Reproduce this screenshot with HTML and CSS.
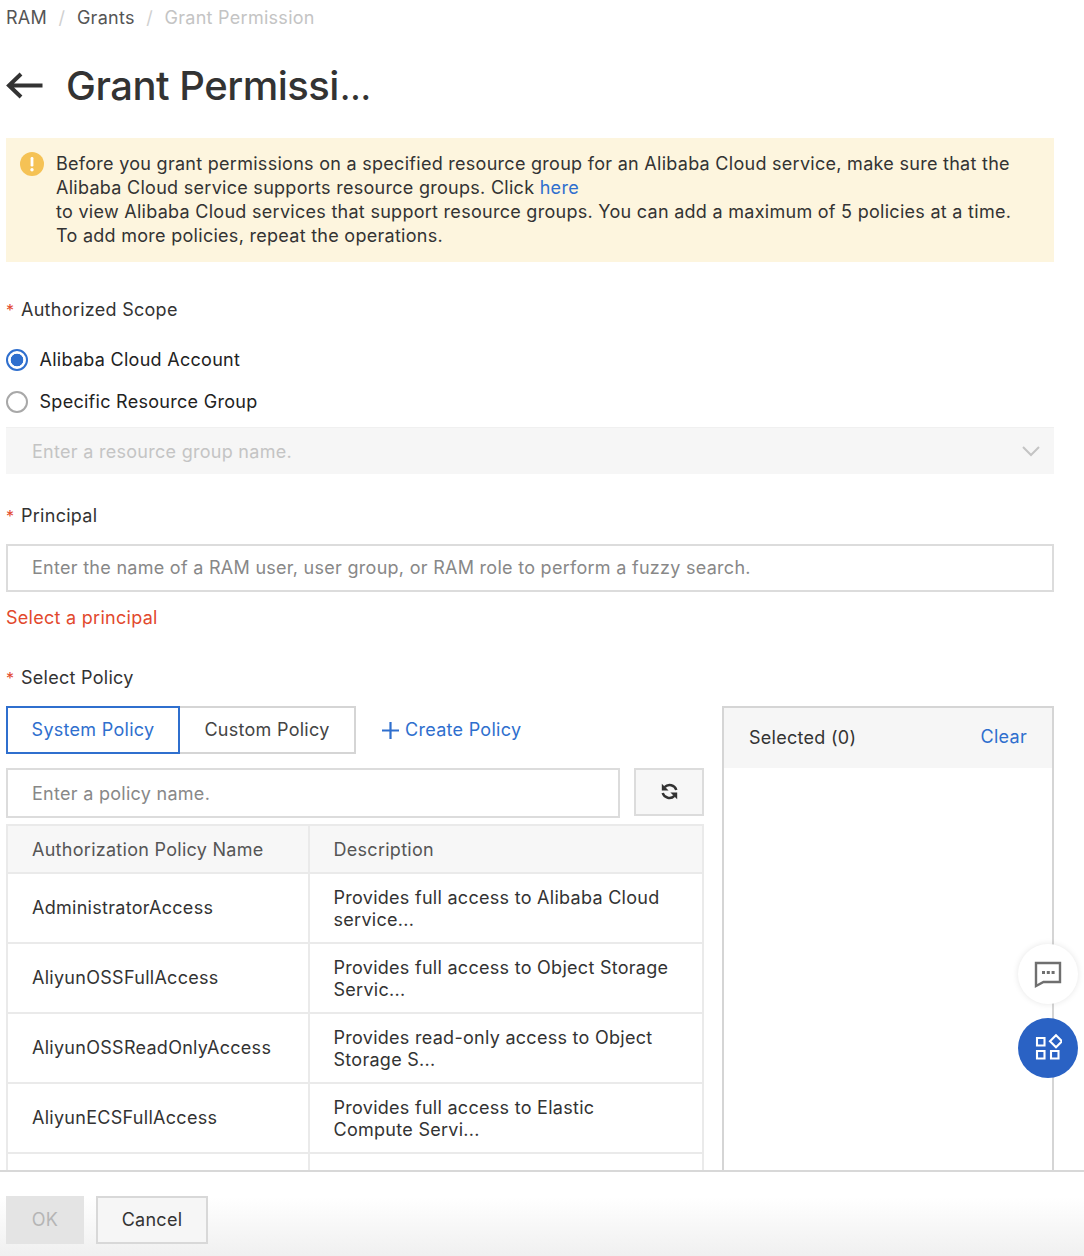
FILE: index.html
```html
<!DOCTYPE html>
<html lang="en">
<head>
<meta charset="utf-8">
<title>Grant Permission</title>
<link rel="stylesheet" href="styles.css">
</head>
<body>
<div class="page">
  <main class="main">
    <nav class="crumbs">
      <span>RAM</span><i class="sep">/</i><span>Grants</span><i class="sep">/</i><span class="crumb-current">Grant Permission</span>
    </nav>
    <header class="title-row">
      <svg class="back" width="37" height="28" viewBox="0 0 37 28"><path d="M36.5 13.5H3M15 2 3 13.5 15 25" fill="none" stroke="#333" stroke-width="4"/></svg>
      <h1 class="title">Grant Permissi<span class="title-dots">…</span></h1>
    </header>
    <section class="notice">
      <svg class="notice-icon" width="24" height="24" viewBox="0 0 24 24"><circle cx="12" cy="12" r="12" fill="#f5c255"/><rect x="10.6" y="5" width="2.8" height="9.5" rx="1.2" fill="#fff"/><circle cx="12" cy="17.8" r="1.7" fill="#fff"/></svg>
      <p class="notice-text">Before you grant permissions on a specified resource group for an Alibaba Cloud service, make sure that the<br>Alibaba Cloud service supports resource groups. Click <a class="link">here</a><br>to view Alibaba Cloud services that support resource groups. You can add a maximum of 5 policies at a time.<br>To add more policies, repeat the operations.</p>
    </section>

    <div class="label label-scope"><span class="req">*</span>Authorized Scope</div>
    <div class="radio-row radio-first"><span class="radio radio-on"></span>Alibaba Cloud Account</div>
    <div class="radio-row radio-second"><span class="radio"></span>Specific Resource Group</div>
    <div class="select">
      <span>Enter a resource group name.</span>
      <svg width="18" height="11" viewBox="0 0 18 11"><path d="M1 1l8 8 8-8" fill="none" stroke="#c4c4c4" stroke-width="2"/></svg>
    </div>

    <div class="label label-principal"><span class="req">*</span>Principal</div>
    <div class="input input-principal">Enter the name of a RAM user, user group, or RAM role to perform a fuzzy search.</div>
    <div class="error">Select a principal</div>

    <div class="label label-policy"><span class="req">*</span>Select Policy</div>
    <div class="policy">
      <div class="policy-left">
        <div class="tabs">
          <span class="tab tab-on">System Policy</span>
          <span class="tab tab-off">Custom Policy</span>
          <a class="create"><svg width="17" height="17" viewBox="0 0 17 17"><path d="M8.5 0v17M0 8.5h17" stroke="#2f6fce" stroke-width="2.2"/></svg>Create Policy</a>
        </div>
        <div class="search">
          <div class="input input-search">Enter a policy name.</div>
          <button class="refresh" type="button">
            <svg class="refresh-icon" width="17" height="17" viewBox="0 0 17 17"><path d="M15.3 7A7 7 0 0 0 3.6 4.2" fill="none" stroke="#333" stroke-width="2.5"/><path d="M.8.8v6.8h6.8z" fill="#333"/><path d="M1.7 10A7 7 0 0 0 13.4 12.8" fill="none" stroke="#333" stroke-width="2.5"/><path d="M16.2 16.2V9.4H9.4z" fill="#333"/></svg>
          </button>
        </div>
        <div class="table">
          <div class="tr th"><div class="td td-name">Authorization Policy Name</div><div class="td td-desc">Description</div></div>
          <div class="tr"><div class="td td-name">AdministratorAccess</div><div class="td td-desc">Provides full access to Alibaba Cloud<br>service...</div></div>
          <div class="tr"><div class="td td-name">AliyunOSSFullAccess</div><div class="td td-desc">Provides full access to Object Storage<br>Servic...</div></div>
          <div class="tr"><div class="td td-name">AliyunOSSReadOnlyAccess</div><div class="td td-desc">Provides read-only access to Object<br>Storage S...</div></div>
          <div class="tr"><div class="td td-name">AliyunECSFullAccess</div><div class="td td-desc">Provides full access to Elastic<br>Compute Servi...</div></div>
          <div class="tr"><div class="td td-name"></div><div class="td td-desc"></div></div>
        </div>
      </div>
      <aside class="selected">
        <div class="selected-head"><span>Selected (0)</span><a class="link">Clear</a></div>
      </aside>
    </div>
  </main>
  <footer class="footer">
    <button class="btn btn-ok" type="button">OK</button>
    <button class="btn btn-cancel" type="button">Cancel</button>
  </footer>
  <div class="fab fab-chat">
    <svg width="28" height="27" viewBox="0 0 28 27"><path d="M2 2h24v19H9.5L2 25z" fill="none" stroke="#6f6f6f" stroke-width="2.4"/><path d="M8 10h3v3H8zM12.8 10h3v3h-3zM17.6 10h3v3h-3z" fill="#6f6f6f"/></svg>
  </div>
  <div class="fab fab-apps">
    <svg width="28" height="28" viewBox="0 0 28 28"><path d="M3 4h7.5v7.5H3zM3 17h7.5v7.5H3zM17 17h7.5v7.5H17zM22 1.2l6 6-6 6-6-6z" fill="none" stroke="#fff" stroke-width="2.1"/></svg>
  </div>
</div>
</body>
</html>
```
FILE: styles.css
```css
* { box-sizing: border-box; }
html, body { margin: 0; padding: 0; }
body {
  font-family: Inter, "Liberation Sans", sans-serif;
  font-size: 18px;
  line-height: 24px;
  color: #333;
  background: #fff;
  letter-spacing: 0.28px;
}
.page { position: relative; width: 1084px; height: 1256px; overflow: hidden; }
.main { height: 1170px; padding: 6px 30px 0 6px; overflow: hidden; }

.crumbs { display: flex; align-items: center; height: 24px; color: #555; }
.sep { font-style: normal; color: #d0d0d0; margin: 0 11.5px; }
.crumb-current { color: #c4c4c4; }

.title-row { display: flex; align-items: center; gap: 23px; height: 60px; margin-top: 26px; }
.back { flex: none; }
.title { margin: 0; padding-top: 2px; font-size: 40px; line-height: 60px; font-weight: 500; letter-spacing: -0.5px; color: #333; }
.title-dots { letter-spacing: 0; margin-left: 1px; font-size: 34px; }

.notice { display: flex; gap: 12px; height: 124px; margin-top: 22px; padding: 14px 14px; background: #fdf5de; }
.notice-icon { flex: none; }
.notice-text { margin: 0; }
.link { color: #2f6fce; }

.label { height: 24px; color: #333; }
.req { display: inline-block; width: 15px; color: #e2492d; font-size: 16px; }
.label-scope { margin-top: 36px; }

.radio-row { display: flex; align-items: center; gap: 11.5px; height: 24px; color: #222; }
.radio-first { margin-top: 26px; }
.radio-second { margin-top: 18px; }
.radio { width: 22px; height: 22px; border: 2px solid #a8a8a8; border-radius: 50%; background: #fff; }
.radio-on { border-color: #2f6fce; background: radial-gradient(circle, #2f6fce 0 6px, #fff 6.6px); }

.select { display: flex; align-items: center; justify-content: space-between; height: 47px; margin-top: 13px; padding: 1px 14px 0 26px; background: #f6f6f6; border-top: 1px solid #f0f0f0; color: #c4c4c4; }
.label-principal { margin-top: 30px; }

.input { display: flex; align-items: center; height: 48px; padding-left: 24px; border: 2px solid #dcdcdc; color: #888; background: #fff; }
.input-principal { margin-top: 16px; }
.error { margin-top: 14px; color: #e2492d; }
.label-policy { margin-top: 36px; }

.policy { display: flex; gap: 18px; margin-top: 16px; height: 520px; }
.policy-left { width: 698px; flex: none; }
.tabs { display: flex; align-items: center; height: 48px; }
.tab { display: flex; align-items: center; justify-content: center; height: 48px; border: 2px solid #d5d5d5; }
.tab-on { width: 174px; border-color: #2f6fce; color: #2f6fce; }
.tab-off { width: 176px; border-left: 0; color: #444; }
.create { display: flex; align-items: center; gap: 6px; margin-left: 26px; color: #2f6fce; }

.search { display: flex; gap: 14px; margin-top: 14px; height: 50px; }
.input-search { width: 614px; height: 50px; padding-top: 2px; }
.refresh { display: flex; align-items: center; justify-content: center; width: 70px; height: 48px; padding: 0 0 2px 0; border: 2px solid #dcdcdc; background: #f7f7f7; }
.refresh-icon { flex: none; }

.table { margin-top: 6px; border-top: 2px solid #eaeaea; border-left: 2px solid #eaeaea; border-right: 2px solid #eaeaea; }
.tr { display: flex; height: 70px; border-bottom: 2px solid #eaeaea; }
.th { height: 48px; background: #f7f7f7; color: #555; }
.th .td { padding-top: 2px; }
.td { display: flex; align-items: center; line-height: 22px; }
.td-name { flex: none; width: 302px; padding-left: 24px; border-right: 2px solid #eaeaea; }
.td-desc { flex: 1; padding: 2px 0 0 23.5px; }

.selected { width: 332px; flex: none; border: 2px solid #d5d5d5; border-bottom: 0; height: 470px; }
.selected-head { display: flex; align-items: center; justify-content: space-between; height: 60px; padding: 0 25px; background: #f6f6f6; }
.selected-head .link { margin-top: -3px; }

.footer { display: flex; gap: 12px; height: 86px; padding: 24px 0 0 6px; border-top: 2px solid #d8d8d8; background: linear-gradient(#fff 30%, #f0f0f0); }
.btn { height: 48px; font: inherit; letter-spacing: inherit; padding: 0; }
.btn-ok { width: 78px; border: 0; background: #e4e4e4; color: #b5b5b5; }
.btn-cancel { width: 112px; border: 2px solid #d8d8d8; background: #f6f6f6; color: #333; }

.fab { position: absolute; left: 1018px; display: flex; align-items: center; justify-content: center; width: 60px; height: 60px; border-radius: 50%; }
.fab-chat { top: 944px; background: #fff; box-shadow: 0 0 6px rgba(0,0,0,0.1); }
.fab-apps { top: 1018px; background: #2a62c4; }
```
